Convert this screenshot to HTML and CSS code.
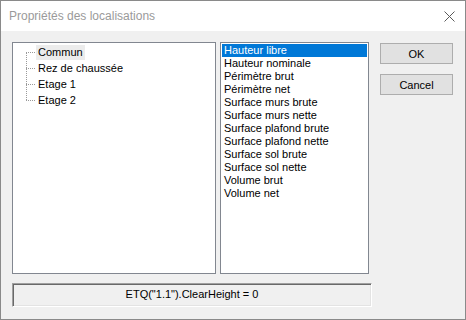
FILE: index.html
```html
<!DOCTYPE html>
<html lang="fr">
<head>
  <meta charset="UTF-8" />
  <title>Propriétés des localisations</title>
  <link rel="stylesheet" href="styles.css">
</head>
<body>

  <div class="dialog">
    <!-- Title bar -->
    <div class="title-bar">
      <span class="title-text">Propriétés des localisations</span>
      <svg class="close-btn" width="11" height="11" viewBox="0 0 11 11">
        <path d="M0.5 0.5 L10.5 10.5 M10.5 0.5 L0.5 10.5" stroke="#5a5a5a" stroke-width="1" fill="none" />
      </svg>
    </div>

    <!-- Content -->
    <div class="dialog-body">
      <div class="main-row">
        <div class="tree-box">
          <ul class="tree">
            <li class="tree-item focused"><span>Commun</span></li>
            <li class="tree-item"><span>Rez de chaussée</span></li>
            <li class="tree-item"><span>Etage 1</span></li>
            <li class="tree-item last"><span>Etage 2</span></li>
          </ul>
        </div>

        <div class="list-box">
          <div class="list-item selected">Hauteur libre</div>
          <div class="list-item">Hauteur nominale</div>
          <div class="list-item">Périmètre brut</div>
          <div class="list-item">Périmètre net</div>
          <div class="list-item">Surface murs brute</div>
          <div class="list-item">Surface murs nette</div>
          <div class="list-item">Surface plafond brute</div>
          <div class="list-item">Surface plafond nette</div>
          <div class="list-item">Surface sol brute</div>
          <div class="list-item">Surface sol nette</div>
          <div class="list-item">Volume brut</div>
          <div class="list-item">Volume net</div>
        </div>

        <div class="buttons">
          <button class="btn">OK</button>
          <button class="btn">Cancel</button>
        </div>
      </div>

      <div class="status">ETQ("1.1").ClearHeight = 0</div>
    </div>
  </div>

</body>
</html>
```

FILE: styles.css
```css
* {
  margin: 0;
  padding: 0;
  box-sizing: border-box;
}

body {
  background: #ffffff;
  font-family: 'Liberation Sans', Arial, sans-serif;
  font-size: 11px;
  color: #000;
}

/* ========== Window ========== */
.dialog {
  width: 466px;
  height: 320px;
  border: 1px solid #8a8a8a;
  display: flex;
  flex-direction: column;
}

.title-bar {
  height: 30px;
  background: #fff;
  display: flex;
  align-items: center;
  justify-content: space-between;
  padding: 0 10px 0 8px;
}

.title-text {
  font-size: 12px;
  color: #9a9a9a;
}

.close-btn {
  display: block;
  margin-top: 1px;
}

.dialog-body {
  flex: 1;
  background: #f0f0f0;
  padding: 11px 11px 0 11px;
}

.main-row {
  display: flex;
  height: 232px;
}

/* ========== Tree ========== */
.tree-box {
  width: 204px;
  background: #fff;
  border: 1px solid #828790;
  padding-top: 1px;
}

.tree {
  list-style: none;
}

.tree-item {
  position: relative;
  height: 16px;
  line-height: 16px;
  padding-left: 23px;
}

.tree-item span {
  display: inline-block;
  height: 15px;
  line-height: 15px;
  margin-top: 1px;
  padding: 0 2px;
}

.tree-item.focused span {
  background: #ececec;
}

/* dotted connector lines */
.tree-item::before {
  content: '';
  position: absolute;
  left: 13px;
  top: 8px;
  width: 9px;
  border-top: 1px dotted #9a9a9a;
}

.tree-item::after {
  content: '';
  position: absolute;
  left: 13px;
  top: 8px;
  height: 16px;
  border-left: 1px dotted #9a9a9a;
}

.tree-item.last::after {
  display: none;
}

/* ========== List ========== */
.list-box {
  width: 149px;
  margin-left: 4px;
  background: #fff;
  border: 1px solid #828790;
  padding: 1px;
}

.list-item {
  height: 13px;
  line-height: 13px;
  padding-left: 2px;
  white-space: nowrap;
}

.list-item.selected {
  background: #0078d7;
  color: #fff;
}

/* ========== Buttons ========== */
.buttons {
  margin-left: 11px;
  display: flex;
  flex-direction: column;
  gap: 10px;
  padding-top: 1px;
}

.btn {
  width: 73px;
  height: 21px;
  background: #e1e1e1;
  border: 1px solid #adadad;
  font-family: 'Liberation Sans', Arial, sans-serif;
  font-size: 11px;
  color: #000;
}

/* ========== Status bar ========== */
.status {
  margin-top: 9px;
  width: 360px;
  height: 24px;
  line-height: 20px;
  text-align: center;
  border-top: 1px solid #a0a0a0;
  border-left: 1px solid #a0a0a0;
  border-right: 1px solid #fff;
  border-bottom: 1px solid #fff;
  box-shadow: inset 1px 1px 0 #696969, inset -1px -1px 0 #e3e3e3;
}
```
